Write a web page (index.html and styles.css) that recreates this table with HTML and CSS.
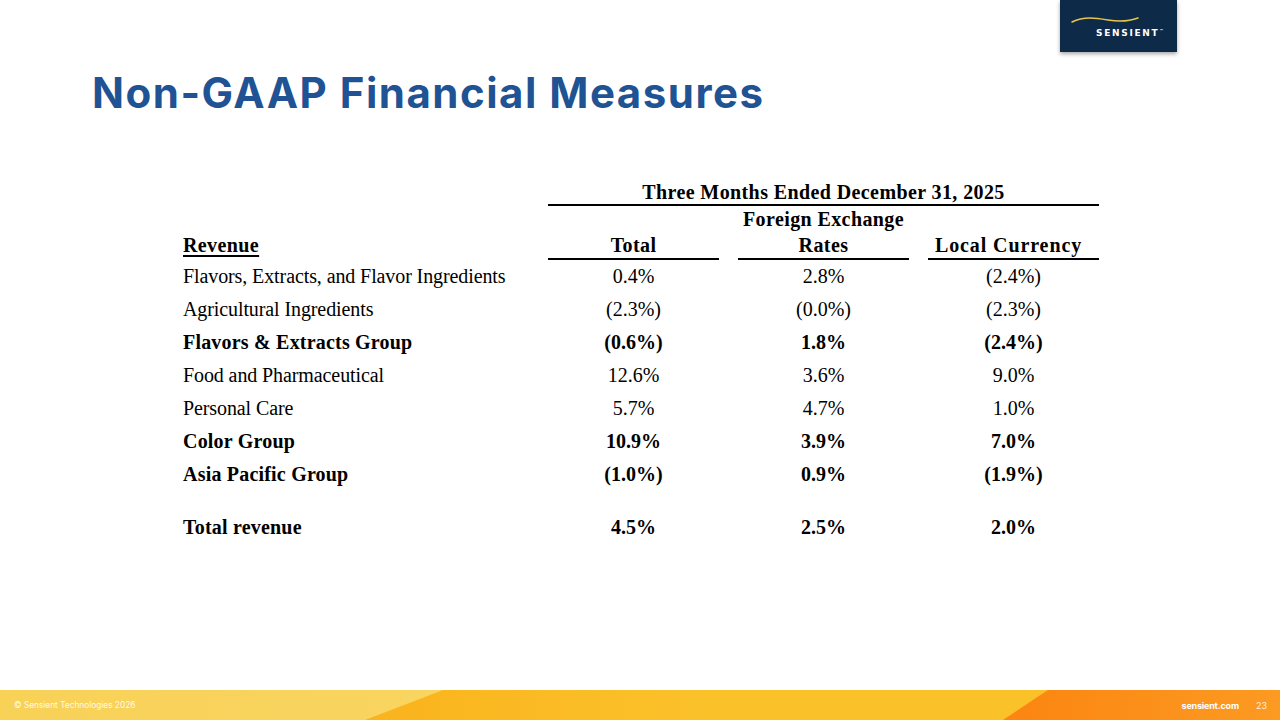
FILE: index.html
```html
<!DOCTYPE html>
<html lang="en">
<head>
<meta charset="utf-8">
<title>Non-GAAP Financial Measures</title>
<link rel="stylesheet" href="styles.css">
</head>
<body>
<div class="slide">
  <header class="top">
    <div class="logo">
      <svg class="swoosh" width="80" height="14" viewBox="0 0 80 14">
        <path d="M2 9 C 14 3, 26 5, 38 7 S 60 8, 68 5" fill="none" stroke="#e9c64a" stroke-width="1.6" stroke-linecap="round"/>
      </svg>
      <span class="logo-text">SENSIENT<sup>™</sup></span>
    </div>
  </header>
  <h1 class="title">Non-GAAP Financial Measures</h1>

  <div class="table">
    <div class="cell span3 head rule h1">Three Months Ended December 31, 2025</div>

    <div class="cell h2"></div>
    <div class="cell h2"></div>
    <div class="cell head center h2">Foreign Exchange</div>
    <div class="cell h2"></div>

    <div class="cell head h3"><span class="u">Revenue</span></div>
    <div class="cell head center rule h3">Total</div>
    <div class="cell head center rule h3">Rates</div>
    <div class="cell head center rule h3 wide">Local Currency</div>

    <div class="cell label">Flavors, Extracts, and Flavor Ingredients</div>
    <div class="cell num">0.4%</div>
    <div class="cell num">2.8%</div>
    <div class="cell num">(2.4%)</div>

    <div class="cell label">Agricultural Ingredients</div>
    <div class="cell num">(2.3%)</div>
    <div class="cell num">(0.0%)</div>
    <div class="cell num">(2.3%)</div>

    <div class="cell label b">Flavors &amp; Extracts Group</div>
    <div class="cell num b">(0.6%)</div>
    <div class="cell num b">1.8%</div>
    <div class="cell num b">(2.4%)</div>

    <div class="cell label">Food and Pharmaceutical</div>
    <div class="cell num">12.6%</div>
    <div class="cell num">3.6%</div>
    <div class="cell num">9.0%</div>

    <div class="cell label">Personal Care</div>
    <div class="cell num">5.7%</div>
    <div class="cell num">4.7%</div>
    <div class="cell num">1.0%</div>

    <div class="cell label b">Color Group</div>
    <div class="cell num b">10.9%</div>
    <div class="cell num b">3.9%</div>
    <div class="cell num b">7.0%</div>

    <div class="cell label b">Asia Pacific Group</div>
    <div class="cell num b">(1.0%)</div>
    <div class="cell num b">0.9%</div>
    <div class="cell num b">(1.9%)</div>

    <div class="cell label b total">Total revenue</div>
    <div class="cell num b total">4.5%</div>
    <div class="cell num b total">2.5%</div>
    <div class="cell num b total">2.0%</div>
  </div>

  <footer class="footer">
    <svg class="footer-bg" width="1280" height="30" viewBox="0 0 1280 30" preserveAspectRatio="none">
      <defs>
        <linearGradient id="g1" x1="0" x2="1" y1="0" y2="0">
          <stop offset="0" stop-color="#f8d157"/>
          <stop offset="0.5" stop-color="#f9d665"/>
          <stop offset="0.85" stop-color="#fbe39a"/>
          <stop offset="1" stop-color="#fbe7a6"/>
        </linearGradient>
        <linearGradient id="g2" x1="0" x2="1" y1="0" y2="0">
          <stop offset="0" stop-color="#fab31c"/>
          <stop offset="0.35" stop-color="#fbc12a"/>
          <stop offset="0.75" stop-color="#fbc128"/>
          <stop offset="1" stop-color="#fbb11b"/>
        </linearGradient>
        <linearGradient id="g3" x1="0" x2="1" y1="0" y2="0">
          <stop offset="0" stop-color="#fb8510"/>
          <stop offset="1" stop-color="#fc9a22"/>
        </linearGradient>
      </defs>
      <rect x="0" y="0" width="1280" height="30" fill="url(#g1)"/>
      <polygon points="443,0 1280,0 1280,30 365,30" fill="url(#g2)"/>
      <polygon points="1048,0 1280,0 1280,30 1003,30" fill="url(#g3)"/>
    </svg>
    <span class="copy">© Sensient Technologies 2026</span>
    <span class="site">sensient.com</span>
    <span class="page">23</span>
  </footer>
</div>
</body>
</html>
```
FILE: styles.css
```css
* { box-sizing: border-box; }
html, body { margin: 0; padding: 0; background: #ffffff; }
.slide {
  width: 1280px;
  height: 720px;
  display: flex;
  flex-direction: column;
  background: #ffffff;
  overflow: hidden;
}
.top {
  display: flex;
  justify-content: flex-end;
  padding-right: 103px;
  height: 52px;
}
.logo {
  width: 117px;
  height: 52px;
  background: #0d2a48;
  box-shadow: 0 2px 4px rgba(0,0,0,0.35);
  display: flex;
  flex-direction: column;
  padding: 13px 0 0 9px;
}
.swoosh { display: block; margin-left: 1px; }
.logo-text {
  font-family: "DejaVu Sans", sans-serif;
  font-weight: 700;
  font-size: 9px;
  color: #ffffff;
  letter-spacing: 1.7px;
  margin: -1px 0 0 27px;
  line-height: 10px;
}
.logo-text sup { font-size: 4px; letter-spacing: 0; vertical-align: 4px; }
.title {
  margin: 18px 0 0 92px;
  font-family: "Inter", "Lato", sans-serif;
  font-weight: 700;
  font-size: 42px;
  line-height: 46px;
  letter-spacing: 1.5px;
  color: #1f5393;
}
.table {
  margin: 64px 0 0 183px;
  width: 916px;
  display: grid;
  grid-template-columns: 346px 171px 171px 171px;
  column-gap: 19px;
  font-family: "Liberation Serif", "Times New Roman", serif;
  font-size: 20px;
  color: #000000;
}
.cell { white-space: nowrap; }
.span3 { grid-column: 2 / 5; }
.head { font-weight: 700; letter-spacing: 0.4px; }
.wide { letter-spacing: 0.9px; padding-right: 10px; }
.center { text-align: center; }
.h1 { text-align: center; line-height: 24px; }
.h2 { line-height: 26px; }
.h3 { line-height: 26px; }
.rule { border-bottom: 2px solid #000000; }
.u { text-decoration: underline; text-decoration-thickness: 2px; text-underline-offset: 3px; }
.label { line-height: 33px; letter-spacing: -0.1px; }
.num { line-height: 33px; text-align: center; }
.b { font-weight: 700; }
.label.b { letter-spacing: 0.2px; }
.total { margin-top: 20px; }
.footer {
  margin-top: auto;
  height: 30px;
  position: relative;
  display: flex;
  align-items: center;
  font-family: "Inter", "Lato", sans-serif;
  color: #ffffff;
}
.footer-bg { position: absolute; left: 0; top: 0; z-index: 0; }
.copy { position: relative; z-index: 1; font-size: 8.3px; margin-left: 14px; opacity: 0.9; }
.site { position: relative; z-index: 1; margin-left: auto; font-size: 9px; font-weight: 700; letter-spacing: -0.2px; }
.page { position: relative; z-index: 1; font-size: 9px; margin: 0 13px 0 17px; opacity: 0.85; }
```
